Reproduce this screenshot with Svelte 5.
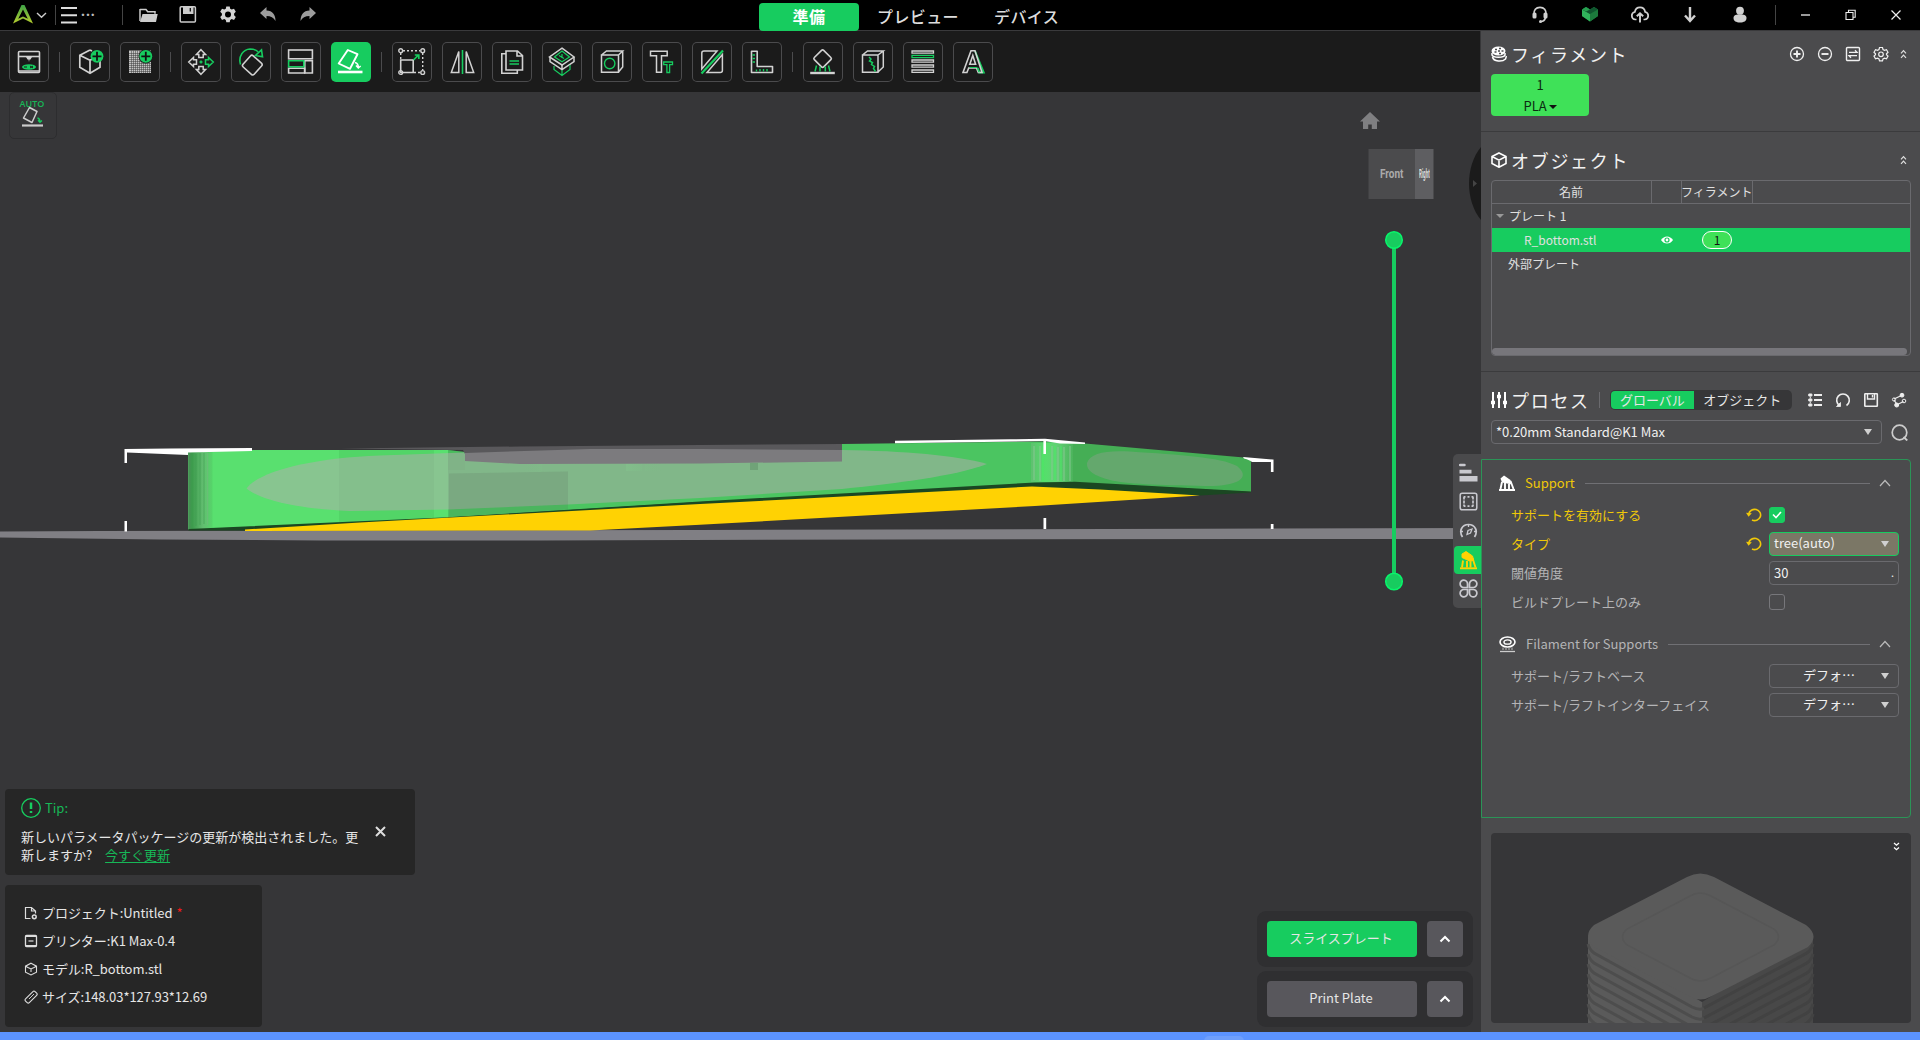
<script>
  const W = '#d2d2d2';
  const G = '#17cc5f';

  // Toolbar glyphs, drawn in a 40x40 box. Empty entries are separators.
  const tools = [
    { d: `<g stroke="${W}" stroke-width="1.6"><rect x="9.5" y="9.5" width="21" height="21" rx="1"/><path d="M9.5 14.5h21"/></g><path d="M17 15h6l-1.500 2.500h-1L20 20l-.5-2.500h-1z" fill="${W}"/><path d="M9.500 29h21" stroke="${W}" stroke-width="1.500"/><ellipse cx="20" cy="25" rx="7" ry="2.800" fill="${G}"/><path d="M15 25h3m3-1l3 2m-3 0l3-2" stroke="#1b1b1b" stroke-width="1"/>` },
    null,
    { d: `<path d="M20 8L9.800 13.300V25.300L20 31.200L30 25.300V19M9.800 13.300L20 18.300V31M20 18.300l3-1.500M20 8l2 1" stroke="${W}" stroke-width="1.700"/><circle cx="27" cy="14.300" r="6.400" fill="${G}"/><path d="M22.500 14.300h9M27 9.800v9" stroke="#111" stroke-width="1.800"/>` },
    { d: `<rect x="9" y="8.500" width="22" height="22.500" fill="#c4c4c4"/><path d="${[11, 13, 15, 17, 19, 21, 23, 25, 27, 29].map((v) => `M9 ${v}.500h22M${v}.500 8.500v22.500`).join('')}" stroke="#3a3a3a" stroke-width=".5"/><circle cx="25.800" cy="14.300" r="7.200" fill="#1b1b1b"/><circle cx="25.800" cy="14.300" r="6.400" fill="${G}"/><path d="M21.300 14.300h9M25.800 9.800v9" stroke="#111" stroke-width="1.800"/>` },
    null,
    { d: `<g stroke="${W}" stroke-width="1.500"><path d="M20 7.700l4.600 4.800h-2.400v3h-4.400v-3h-2.400z"/><path d="M20 32.300l4.600-4.800h-2.400v-3h-4.400v3h-2.400z"/><path d="M7.700 20l4.800-4.600v2.400h3v4.400h-3v2.400z"/><path stroke="${G}" d="M32.300 20l-4.800-4.600v2.400h-3v4.400h3v2.400z"/></g><path d="M18.500 20h3M20 18.500v3" stroke="${G}" stroke-width="1.500"/>` },
    { d: `<rect x="13.800" y="15.600" width="15" height="15" rx="2" transform="rotate(42 21.300 23.100)" stroke="${W}" stroke-width="1.600"/><path d="M9.500 22.500C7 14 12.500 7.300 19 7c3.500 0 6 .8 8 2.800M30.500 7.800l1 7-7-1.300z" stroke="${G}" stroke-width="1.600"/>` },
    { d: `<g stroke="${W}" stroke-width="1.600"><rect x="7.600" y="8" width="23.800" height="8.800"/><path d="M23.800 18.800h7.600v12.200h-7.600z"/><path d="M7.600 26.200h16v4.800h-16z"/><path stroke="${G}" d="M7.600 18.800h15.200v6H7.600z"/></g>` },
    { active: true, d: `<path d="M16.800 8l9.700 4.200-7.500 14.600-11.300-5.300z" stroke="#fff" stroke-width="1.900" stroke-linejoin="round"/><path d="M7 30h24.500" stroke="#fff" stroke-width="2.600"/><path d="M24 20.500q3.500 1 3.300 5m-2.300-2l2.300 2.500 2.400-2" stroke="#fff" stroke-width="1.500"/>` },
    null,
    { d: `<g stroke="${W}" stroke-width="1.400"><path d="M11 8.700h17M30.700 11v17M28 30.500h-6M8.700 11v7" stroke-dasharray="2 2"/><path d="M8.700 18h12.500v12.500H8.700z" stroke-width="1.600"/><circle cx="8.700" cy="8.700" r="1.900"/><circle cx="30.700" cy="8.700" r="1.900"/><circle cx="30.700" cy="30.500" r="1.900"/><circle cx="8.700" cy="30.500" r="1.900"/></g><path d="M21.500 18l4.500-4.500M22.800 13h4v4" stroke="${G}" stroke-width="1.700"/>` },
    { d: `<path d="M16.800 9.500v21H9.300zM24.200 9.500v21h7.500z" stroke="${W}" stroke-width="1.500"/><path d="M20.500 8v24" stroke="${G}" stroke-width="1.600"/>` },
    { d: `<g stroke="${W}" stroke-width="1.600"><path d="M14 9h11.500l5 4.500V28H14zM25 9v5h5.500"/><path d="M14 11.800H9.800v19.400h15.500V28"/></g><path d="M17.500 19h9.500M17.500 22h9.500" stroke="${G}" stroke-width="1.400"/>` },
    { d: `<g stroke="${W}" stroke-width="1.500"><path d="M20 6.200l12 8.800-12 8-12.500-8z"/><path d="M8 15v4.500l12 8 12-8V15M20 23v5"/></g><path d="M20 9l7.500 6-7.500 4.800L12.500 15zM12 24v3.500l8 6 8-6V23M20 28v5M17 13.500l5 3M20 12v4" stroke="${G}" stroke-width="1.200"/>` },
    { d: `<path d="M9.500 13h17v17.200h-17zM9.500 13l5-4h16.200l-4.200 4M30.700 9v16l-4.200 5" stroke="${W}" stroke-width="1.500"/><circle cx="17.700" cy="21.500" r="5.200" stroke="${G}" stroke-width="1.400"/>` },
    { d: `<path d="M8.500 9.200h16.700v4.600h-5.700v16.500h-5V13.800h-6z" stroke="${W}" stroke-width="1.500"/><path d="M21.700 20h8.800v2.600h-2.900v7.900h-2.700v-7.900h-3.200z" stroke="${G}" stroke-width="1.300"/>` },
    { d: `<g stroke="${W}" stroke-width="1.500"><path d="M25 9H12Q9.800 9 9.800 11v16z"/><path d="M15 30.500h13.200q2.200 0 2.200-2V12.500z"/></g><path d="M9.500 31.500L31 8.500" stroke="${G}" stroke-width="2.200"/>` },
    { d: `<path d="M9.500 9.300h5.700v15.200h15.300v6H9.500z" stroke="${W}" stroke-width="1.600" stroke-linejoin="round"/><path d="M10.500 13h2.500M10.500 16.500h2.500M10.500 20h2.500M14.500 29.500v-2M18 29.500v-2.500M21.500 29.500v-2.500M25 29.500v-2.500" stroke="${G}" stroke-width="1.400"/>` },
    null,
    { d: `<rect x="13" y="10" width="13.200" height="13.200" rx="1.500" transform="rotate(45 19.600 16.600)" stroke="${W}" stroke-width="1.600"/><path d="M7.200 31h24.600" stroke="${W}" stroke-width="2.400"/><path d="M12 29.500l1.500-6M17 29.500v-5M22.300 29.500v-5M27 29.500l-1.500-6" stroke="${G}" stroke-width="1.500"/>` },
    { d: `<path d="M9.500 13h15.500v17.200H9.500zM9.500 13l5-4h15.800L25 13M30.300 9v16L25 30" stroke="${W}" stroke-width="1.500"/><path d="M16 15l2 2-1.500 2 3 1.500-1 2 3 2-1 2 2 3" stroke="${G}" stroke-width="1.500"/>` },
    { d: `<g stroke="${W}" stroke-width="1.300"><path d="M9 9h21.500v2.200H9z"/><path stroke="${G}" d="M9 13.300h21.500v2.400H9z"/><path d="M9 18h21.500v2.200H9zM9 23h21.500v2.200H9zM9 28h21.500v2.400H9z"/></g>` },
    { d: `<path d="M22 9l8.800 21.500h-4.500l-1.600-4.500" stroke="${G}" stroke-width="1.900"/><path d="M18 8.800h4l7 21.700h-3.700L23.500 26h-7.800l-1.800 4.500H10zM16.800 22.300h5.800L19.800 13.500z" stroke="${W}" stroke-width="1.600"/><path d="M16.500 25.500h7.500l2 5" stroke="${G}" stroke-width="1"/>` },
  ];

  const fileIcons = [
    `<path d="M2 4.500h6l1.700 2.200H17v2" stroke="#ccc" stroke-width="1.500"/><path d="M2 4v12" stroke="#ccc" stroke-width="1.500"/><path d="M4.500 9h15.200L18 17H2z" fill="#ccc"/>`,
    `<rect x="2.200" y="1.800" width="15.200" height="15.200" rx="1" stroke="#ccc" stroke-width="1.500"/><path d="M5 1.500h10.500v7.500H5z" fill="#ccc"/><path d="M12.300 3v3.500" stroke="#111" stroke-width="1.300"/>`,
    `<path d="M8.300 1.500h3.400l.5 2.300 1.500.8 2.300-.8 1.800 3-1.700 1.700v1.700l1.700 1.700-1.800 3-2.300-.8-1.500.8-.5 2.300H8.300l-.5-2.300-1.500-.8-2.300.8-1.800-3 1.700-1.700V8.500L2.200 6.800l1.800-3 2.300.8 1.500-.8z" fill="#d4d4d4"/><circle cx="10" cy="9.500" r="3" fill="#000"/>`,
    `<path d="M2 8L8.500 2v3.500c6 .3 9 4 9 10.500-2-3.300-4.500-5-9-5V14z" fill="#9c9c9c"/>`,
    `<path d="M18 8l-6.500-6v3.500c-6 .3-9 4-9 10.500 2-3.300 4.500-5 9-5V14z" fill="#9c9c9c"/>`,
  ];

  const cloudIcons = [
    `<path d="M4 9.500C3.500 5 6 2.300 10 2.300s6.500 2.700 6 7.200M15.500 12.500q-1 4-4.500 4" stroke="#d0d0d0" stroke-width="1.700"/><rect x="2.500" y="7.500" width="4" height="6" rx="1.500" fill="#d0d0d0"/><rect x="13.500" y="7.500" width="4" height="6" rx="1.500" fill="#d0d0d0"/><circle cx="10.500" cy="16.500" r="1.500" fill="#d0d0d0"/>`,
    `<path d="M2 4.500L6 2l4 2.500L14 2l4 2.500V11l-8 5.500L2 11z" fill="#18893f"/><path d="M2 4.500L10 9v7.500L2 11z" fill="#31b45c"/><path d="M10 9l8-4.500V11l-8 5.500z" fill="#1c7a3c"/><path d="M2 4.500L6 2l4 2.500 4-2.500 4 2.500L10 9z" fill="#10562f"/><path d="M2 4.500L6 2l4 2.500-4 2z" fill="#26a050"/>`,
    `<path d="M6.500 14.500H5.300a3.800 3.800 0 01-.5-7.500C5.300 4 7.500 2.300 10 2.300s4.700 1.700 5.200 4.700a3.800 3.800 0 01-.5 7.500h-1.200" stroke="#d0d0d0" stroke-width="1.700"/><path d="M10 17.500V8.500M6.800 11.300L10 8.200l3.200 3.100" stroke="#d0d0d0" stroke-width="1.900"/>`,
    `<path d="M10 2v13M5 10.500l5 5.500 5-5.500" stroke="#d0d0d0" stroke-width="2.400"/>`,
    `<circle cx="10" cy="5.700" r="3.900" fill="#d0d0d0"/><path d="M3.500 13c0-3 3-3.800 6.500-3.800s6.500.8 6.500 3.800-2.500 4.500-6.500 4.500S3.500 16 3.500 13z" fill="#d0d0d0"/>`,
  ];

  const filamentIcons = [
    `<circle cx="10" cy="10" r="6.500" stroke-width="1.300"/><path d="M6.500 10h7M10 6.500v7" stroke-width="1.900"/>`,
    `<circle cx="10" cy="10" r="6.500" stroke-width="1.300"/><path d="M6.500 10h7" stroke-width="1.900"/>`,
    `<rect x="3.500" y="3.500" width="13" height="13" rx="1" stroke-width="1.400"/><path d="M6 8.300h8l-2-2M14 11.700H6l2 2" stroke-width="1.300"/>`,
    `<path d="M8.500 3.500h3l.5 2 1.500.8 2-.6 1.500 2.600-1.500 1.400v1l1.500 1.400-1.500 2.600-2-.6-1.500.8-.5 2h-3l-.5-2-1.500-.8-2 .6L3 12.100l1.500-1.400v-1L3 8.300l1.500-2.600 2 .6L8 5.500z" stroke-width="1.200"/><circle cx="10" cy="10.300" r="2.300" stroke-width="1.200"/>`,
  ];

  const processIcons = [
    `<path d="M3 5h4.500M3 10h4.500M3 15h4.500" stroke-width="1.300"/><path d="M5.300 3.500v3M5.300 8.500v3M5.300 13.500v3" stroke-width="3"/><path d="M9 5h8M9 10h8M9 15h8" stroke-width="2"/><path d="M5.300 6.500v2M5.300 11.500v2" stroke-width="1"/>`,
    `<path d="M6.500 15.500A6.300 6.300 0 1113.500 15.500" stroke-width="1.600"/><path d="M3.500 16.500h4v-4z" fill="#eee" stroke-width=".8"/>`,
    `<rect x="3.800" y="3.800" width="12.500" height="12.500" rx=".5" stroke-width="1.600"/><path d="M6.500 4v5h7V4M11.500 5v2.500" stroke-width="1.400"/>`,
    `<path d="M5 9L12.500 5.500M5 10l3 4.500M7.500 15l7-3.500" stroke-width="1.300"/><circle cx="5" cy="9.500" r="1.600"/><circle cx="13" cy="5.200" r="1.900" fill="#eee"/><circle cx="7.700" cy="15" r="2" fill="#eee"/><circle cx="15" cy="11" r="1.800"/>`,
  ];

  const tabs = [
    { d: `<path d="M1 2h4.500" stroke-width="2.500" stroke-linecap="round"/><path d="M.5 6.700h12v3.800H.5zM.5 13h18v5.500H.5z" fill="#c9c9cf" stroke="none"/>` },
    { d: `<rect x="1.200" y="1.200" width="16.600" height="16.600" rx="2" stroke-width="1.500"/><path d="M5 4.800h9M5 14.200h9" stroke-width="1.700" stroke-dasharray="1.500 2 2 2"/><path d="M5 4.500v10M14 4.500v10" stroke-width="1.700" stroke-dasharray="3 1"/>` },
    { d: `<path d="M3.500 16C-.5 10 3 3.500 9.500 3.500S19.500 10 15.500 16" stroke-width="1.700"/><path d="M2 10.500h2M15 10.500h2M9.500 4v2" stroke-width="1.300"/><path d="M8 13.500l1-4 4-1.500-1.500 4z" stroke-width="1.300"/>` },
    { active: true, d: `<path d="M3 3l4-2.500 6.500 4.500 1 4-3 1.500L3 6.500z" fill="#ffd203" stroke="#ffd203"/><path d="M1 17.300h17" stroke="#ffd203" stroke-width="1.900"/><path d="M3 16.500l1-7M8 16.500V10M11.500 16.500v-6M16.500 16.500L13.500 7" stroke="#ffd203" stroke-width="1.900"/>` },
    { d: `<g stroke-width="1.700"><path d="M8.500 8.500H5A3.700 3.700 0 118.500 5zM10.500 8.500V5a3.700 3.700 0 113.700 3.500zM8.500 10.500V14A3.700 3.700 0 114.800 10.500zM10.500 10.500h3.500a3.700 3.700 0 11-3.500 3.500z"/></g>` },
  ];

  const info = [
    { label: 'プロジェクト:Untitled', star: true, d: `<path d="M6.500 12.500H1.500V1.500h6l4 3.500v2.500M7.500 1.500V5h4"/><circle cx="10.300" cy="10.800" r="1.900" stroke-width="1.500"/>` },
    { label: 'プリンター:K1 Max-0.4', d: `<rect x="1.500" y="1.500" width="11" height="11" rx="1" stroke-width="1.300"/><path d="M1.500 2.300h11M1.500 11.700h11" stroke-width="1.500"/><path d="M4.500 7h5" stroke-width="1.200"/>` },
    { label: 'モデル:R_bottom.stl', d: `<path d="M7 1.200l5.500 3v6L7 13l-5.500-2.800v-6zM4 5.500L7 7l3-1.500M7 7v3M1.500 4.200L4 5.500M12.500 4.200L10 5.500" stroke-width="1.100"/>` },
    { label: 'サイズ:148.03*127.93*12.69', d: `<rect x=".3" y="4.500" width="13.400" height="5.300" rx="1.500" transform="rotate(-45 7 7)" stroke-width="1.100"/><path d="M5 9l5-5" stroke-width=".9"/>` },
  ];
</script>

{#snippet icon(d, size, box = size)}
  <svg width={size} height={size} viewBox="0 0 {box} {box}" fill="none">{@html d}</svg>
{/snippet}

{#snippet collapse()}
  <svg class="collapse" width="9" height="10" viewBox="0 0 9 10" fill="none"><path d="M2 4.300L4.500 1.700 7 4.300M2 8.800L4.500 6.200 7 8.800" stroke="#e0e0e0" stroke-width="1.200" /></svg>
{/snippet}

{#snippet reset()}
  <svg class="reset" width="16" height="16" viewBox="0 0 16 16" fill="none"><path d="M2.700 7A6 5.600 0 116 13" stroke="#f0c808" stroke-width="1.600" /><path d="M0 5.800l5.800.4-3.200 3.500z" fill="#f0c808" /></svg>
{/snippet}

{#snippet combo(text, extra)}
  <div class="combo {extra}"><span>{text}</span><i class="tri"></i></div>
{/snippet}

<div class="app">
  <header class="titlebar">
    <svg class="logo" width="22" height="20" viewBox="0 0 22 20"><defs><linearGradient id="lg" x1="0" y1="0" x2="0" y2="1"><stop offset="0" stop-color="#3fa447" /><stop offset="1" stop-color="#b5cc2e" /></linearGradient></defs><path fill="url(#lg)" d="M9.500 0h3L21 18.500l-10-5-10 5zM11 4.500L6.200 13.800 11 11.500l4.800 2.300z" /></svg>
    <svg class="caret" width="11" height="7" viewBox="0 0 11 7" fill="none"><path d="M1 1l4.500 4.300L10 1" stroke="#ccc" stroke-width="1.400" /></svg>
    <i class="vline"></i>
    <svg class="burger" width="16" height="17" viewBox="0 0 16 17"><path d="M0 1h16M0 8.300h16M0 15.500h16" stroke="#ddd" stroke-width="2" /></svg>
    <span class="dots">···</span>
    <i class="vline v2"></i>
    <div class="files">{#each fileIcons as d}{@render icon(d, 20)}{/each}</div>
    <nav class="modes"><b class="on">準備</b><b>プレビュー</b><b>デバイス</b></nav>
    <div class="cloud">{#each cloudIcons as d}{@render icon(d, 20)}{/each}</div>
    <i class="vline"></i>
    <div class="win">
      {@render icon('<path d="M1 6h9" stroke="#eee" stroke-width="1.300"/>', 12)}
      {@render icon('<path d="M1 3.500h7v7H1zM3.500 3.500V1.300h6.700v7H8" stroke="#eee" stroke-width="1.100"/>', 12)}
      {@render icon('<path d="M1.500 1.500l9 9M10.500 1.500l-9 9" stroke="#eee" stroke-width="1.200"/>', 12)}
    </div>
  </header>

  <div class="body">
    <main>
      <div class="toolbar">
        {#each tools as t}
          {#if t}
            <button class="tool" class:active={t.active}>{@render icon(t.d, 40)}</button>
          {:else}
            <i class="sep"></i>
          {/if}
        {/each}
      </div>

      <section class="viewport">
        <svg class="scene" width="1481" height="940" viewBox="0 92 1481 940">
          <defs>
            <linearGradient id="edgeL"><stop offset="0" stop-color="#4c8d58" /><stop offset=".15" stop-color="#3c9b4c" /><stop offset=".6" stop-color="#62bd70" /><stop offset="1" stop-color="#55d569" /></linearGradient>
            <linearGradient id="corner"><stop offset="0" stop-color="#5fc070" /><stop offset=".35" stop-color="#55df6b" /><stop offset=".6" stop-color="#62d075" /><stop offset="1" stop-color="#4cb45c" /></linearGradient>
            <linearGradient id="fade"><stop offset="0" stop-color="#7cbb85" stop-opacity="0" /><stop offset=".5" stop-color="#8ccb95" /><stop offset="1" stop-color="#7cbb85" stop-opacity="0" /></linearGradient>
          </defs>
          <polygon fill="#807f84" points="0,531.5 100,531 700,530 1200,528.700 1481,528 1481,539 1250,539 890,539.500 540,540.500 320,540.500 160,539.500 0,537.500" />
          <polygon fill="#4bc561" points="188.500,452 252,450 448,450 465,452 465,460 842,460 842,444 1045,441.500 1085,443.500 1085,483 1035,484.500 700,502 448,517.500 188.500,529.500" />
          <polygon fill="#59e06f" points="188.500,452 252,450 448,450 448,518 188.500,529.500" />
          <polygon fill="#52d567" points="339,450 448,450 448,518 339,523" />
          <polygon fill="#59e06f" points="434,450 448,450 448,518 434,518.600" />
          <path d="M188.500 452h24v76.500l-24 1.200z" fill="url(#edgeL)" />
          <path d="M191 454v72M196 454v72M200 453v72M204 453v71" stroke="#3f9d50" stroke-width="1" opacity=".6" />
          <path d="M207.500 453v72" stroke="#73b97e" stroke-width="1.500" opacity=".6" />
          <polygon fill="#45ae55" points="1072,442.500 1085,443.500 1244,457.500 1251,460 1251,492 1072,482.500" />
          <path d="M448 450l17 2v18h-17z" fill="#45ae55" opacity=".4" />
          <path d="M246.500 488.500C258 472 310 458 380 455.500L465 452.500 590 449 842 450C905 451 955 455 987 464C955 476 900 483 842 489L700 498 568 504.500 448 509.500 350 511C300 509 262 501 246.500 488.500z" fill="#b9aab3" fill-opacity=".49" />
          <path d="M1087 463C1090 453 1106 450 1130 451.500C1180 455 1220 457 1237 466C1252 478 1237 486.500 1205 486C1160 485 1125 484 1110 480C1095 476 1086 471 1087 463z" fill="#8aa28c" fill-opacity=".45" />
          <path d="M449 473.500l119-2v38l-119 8.500z" fill="#4a4a50" fill-opacity=".13" />
          <polygon fill="#59585b" points="340,448.500 520,446.500 700,445 842,444 842,452 465,454 463,450" />
          <polygon fill="#7c7b7e" points="465,453 590,449 700,449 842,450 842,461.500 700,463.500 520,464 465,461" />
          <path d="M524 464h18v8h-18zM626 464h16v7h-16zM645 464h16v7h-16z" fill="url(#fade)" />
          <path d="M750 463h8v7h-8z" fill="#4f7d58" opacity=".35" />
          <path d="M1031 443l42 0v39l-42 0z" fill="url(#corner)" />
          <path d="M1034 446v34M1040 446v35M1052 446v34M1058 447v34M1064 447v34M1070 446v35" stroke="#8cc797" stroke-width="2" opacity=".45" />
          <path d="M1043 446v35M1055 446v35M1061 446v35" stroke="#45f262" stroke-width="1.500" opacity=".55" />
          <polygon fill="#1b4722" points="188.500,529 448,517.300 700,501.500 1035,482.500 1075,481.800 1251,491.500 1251,492.500 1200,495.500 1030,487.500 700,504.500 245,530.500 188.500,530.500" />
          <polygon fill="#ffd203" points="245,529.500 360,522.500 700,504 1032,486.500 1100,489.500 1200,495.500 1035,506 700,524.700 590,530.500 245,531" />
          <path d="M124.500 449L170 448.500 252 448v3L188 452.500v2.500L127 452.500v10.500h-2.500zM124.500 521h2.500v10.500h-2.500zM895 440.700L1010 439.300 1045 438.700 1085 442.500v1.500l-25-.5-14-2.300v12.800h-2.600V441L895 443.300zM1043.500 518h2.700v11h-2.700zM1243 457l29.500 2.500h1v12.500h-2.600v-10L1252 462q-2-2-8-3.500zM1270.800 524h2.700v5h-2.700z" fill="#fff" />
          <path d="M1394 240v342" stroke="#17cc5f" stroke-width="4" />
          <g fill="#17cc5f" stroke="#08f56b" stroke-width="1.500"><circle cx="1394" cy="240" r="8.300" /><circle cx="1394" cy="581.500" r="8.300" /></g>
          <path d="M1370 112l-10 9.500h3V129h5.200v-4.500h3.600V129h5.200v-7.500h3z" fill="#7f7f81" />
          <path d="M1368.500 149h46.500v50h-46.500z" fill="#4b4b4d" /><path d="M1415 149h18.500v50H1415z" fill="#5e5e61" />
          <path d="M1481 147c-16 19-16 54 0 73z" fill="#1b1b1b" /><path d="M1473 180v7l4-3.500z" fill="#444" />
        </svg>
        <span class="face front">Front</span>
        <span class="face right">Right</span>

        <div class="auto">
          <span>AUTO</span>
          <svg width="24" height="22" viewBox="0 0 24 22" fill="none"><path d="M9.500 1.500l7.500 4-5 11L3.500 12z" stroke="#ccc" stroke-width="1.500" stroke-linejoin="round" /><path d="M2 19.500h21" stroke="#ccc" stroke-width="2.200" /><path d="M17.500 12q2.500.5 2.500 4m-2-1.700l2 2 2-1.700" stroke="#17cc5f" stroke-width="1.300" /></svg>
        </div>

        <div class="left-stack">
          <div class="tip">
            <div class="tip-main">
              <div class="tip-head">
                {@render icon('<circle cx="10" cy="10" r="9.300" stroke="#17cc5f" stroke-width="1.300"/><path d="M10 4.500v6.500M10 13v2" stroke="#17cc5f" stroke-width="2.500"/>', 20)}
                <span>Tip:</span>
              </div>
              <p>新しいパラメータパッケージの更新が検出されました。更<br />新しますか? <u>今すぐ更新</u></p>
            </div>
            {@render icon('<path d="M1 1l9 9M10 1l-9 9" stroke="#ddd" stroke-width="2"/>', 11)}
          </div>
          <div class="info">
            {#each info as row}
              <div class="info-row">
                <svg width="14" height="14" viewBox="0 0 14 14" fill="none" stroke="#ddd" stroke-width="1.200">{@html row.d}</svg>
                <span>{row.label}</span>{#if row.star}<em>*</em>{/if}
              </div>
            {/each}
          </div>
        </div>

        <div class="actions">
          {#each [['スライスプレート', true], ['Print Plate', false]] as [text, primary]}
            <div class="action">
              <button class="main" class:primary>{text}</button>
              <button class="up"><svg width="12" height="8" viewBox="0 0 12 8" fill="none"><path d="M1.500 6.500L6 2l4.500 4.500" stroke="#fff" stroke-width="2" /></svg></button>
            </div>
          {/each}
        </div>

        <div class="tabs">
          {#each tabs as t}
            <div class="tab" class:active={t.active}>
              <svg width="19" height="19" viewBox="0 0 19 19" fill="none" stroke="#c9c9cf">{@html t.d}</svg>
            </div>
          {/each}
        </div>
      </section>
    </main>

    <aside>
      <section class="filament">
        <div class="heading">
          <svg width="16" height="16" viewBox="0 0 16 16" fill="none"><ellipse cx="7.500" cy="5" rx="7" ry="4.500" fill="#fff" /><path d="M1 7v2c1 3 12 3 13 0V7M1.500 11c1 5 10 5 13 2l1-3" stroke="#fff" stroke-width="1.500" /><path d="M4 3.500h2M8 2.500h2M10.500 5h2M3.500 6h2M7 5h2M8 7.500h2" stroke="#4b4b4d" stroke-width="1.300" /></svg>
          <h2>フィラメント</h2>
          <div class="icons">{#each filamentIcons as d}<svg width="20" height="20" viewBox="0 0 20 20" fill="none" stroke="#f0f0f0">{@html d}</svg>{/each}</div>
          {@render collapse()}
        </div>
        <div class="spool"><span>1</span><span>PLA <i></i></span></div>
      </section>

      <section class="objects">
        <div class="heading">
          <svg width="16" height="16" viewBox="0 0 16 16" fill="none"><path d="M8 1l7 3.500v7L8 15.200 1 11.500v-7zM1 4.500l7 3.700 7-3.700M8 8.200V15" stroke="#fff" stroke-width="1.600" /></svg>
          <h2>オブジェクト</h2>
          {@render collapse()}
        </div>
        <div class="tree">
          <div class="cols"><span>名前</span><span></span><span>フィラメント</span><span></span></div>
          <div class="node"><i class="open"></i>プレート 1</div>
          <div class="node selected">
            <span class="name">R_bottom.stl</span>
            <svg class="eye" width="12" height="8" viewBox="0 0 12 8"><path d="M0 4C3-.8 9-.8 12 4 9 8.800 3 8.800 0 4z" fill="#fff" /><circle cx="6" cy="4" r="2.600" fill="#17cc5f" /><circle cx="6" cy="4" r="1.400" fill="#fff" /></svg>
            <span class="pill">1</span>
          </div>
          <div class="node">外部プレート</div>
          <div class="hscroll"></div>
        </div>
      </section>

      <section class="process">
        <div class="heading">
          <svg width="16" height="18" viewBox="0 0 16 18" fill="none"><path d="M2 1v16M8 1v16M14 1v16" stroke="#fff" stroke-width="2" /><path d="M0 11.500h4M6 5.500h4M12 11.500h4" stroke="#fff" stroke-width="3.400" /></svg>
          <h2>プロセス</h2>
          <i class="bar"></i>
          <div class="toggle"><b>グローバル</b><span>オブジェクト</span></div>
          <div class="icons">{#each processIcons as d}<svg width="20" height="20" viewBox="0 0 20 20" fill="none" stroke="#eee">{@html d}</svg>{/each}</div>
        </div>
        <div class="preset">
          {@render combo('*0.20mm Standard@K1 Max', 'wide')}
          {@render icon('<circle cx="8.500" cy="8.500" r="7.300" stroke="#ccc" stroke-width="1.700"/><path d="M12.500 13l3.800 3.500" stroke="#ccc" stroke-width="1.800"/>', 17)}
        </div>
      </section>

      <section class="params">
        <div class="group changed">
          <svg width="16" height="16" viewBox="0 0 16 16" fill="none"><path d="M1.500 3.500L5 .5l6.500 4.500 1.500 4.500L3 7.500z" fill="#fff" /><path d="M0 15h16M1.500 14l1.500-7M6 14V8M10 14V9M14.500 14L11.500 6" stroke="#fff" stroke-width="1.900" /></svg>
          <span>Support</span><i></i>
          <svg width="12" height="8" viewBox="0 0 12 8" fill="none"><path d="M1 7l5-5.500L11 7" stroke="#bbb" stroke-width="1.200" /></svg>
        </div>
        <div class="row changed"><label for="c1">サポートを有効にする</label>{@render reset()}<div class="ctl"><span class="check on"><svg width="10" height="8" viewBox="0 0 10 8" fill="none"><path d="M1 3.500L4 6.500 9 1" stroke="#fff" stroke-width="1.600" /></svg></span></div></div>
        <div class="row changed"><label for="c2">タイプ</label>{@render reset()}<div class="ctl">{@render combo('tree(auto)', 'hot')}</div></div>
        <div class="row"><label for="c3">閾値角度</label><div class="ctl"><div class="field"><span>30</span><small>.</small></div></div></div>
        <div class="row"><label for="c4">ビルドプレート上のみ</label><div class="ctl"><span class="check"></span></div></div>
        <div class="group second">
          <svg width="17" height="17" viewBox="0 0 17 17" fill="none"><ellipse cx="8.500" cy="6" rx="7.500" ry="5" stroke="#fff" stroke-width="1.600" /><ellipse cx="8.500" cy="6" rx="3.600" ry="2.200" stroke="#fff" stroke-width="1.300" /><path d="M4 11.500v2.500M7 12v2M10 12v2M13 11.500v2.500" stroke="#bbb" stroke-width="1" /><path d="M1 15.500h15" stroke="#ccc" stroke-width="1.300" /></svg>
          <span>Filament for Supports</span><i></i>
          <svg width="12" height="8" viewBox="0 0 12 8" fill="none"><path d="M1 7l5-5.500L11 7" stroke="#bbb" stroke-width="1.200" /></svg>
        </div>
        <div class="row"><label for="c5">サポート/ラフトベース</label><div class="ctl">{@render combo('デフォ…', 'mid')}</div></div>
        <div class="row"><label for="c6">サポート/ラフトインターフェイス</label><div class="ctl">{@render combo('デフォ…', 'mid')}</div></div>
      </section>

      <section class="preview">
        <svg width="420" height="190" viewBox="1491 833 420 190" fill="none">
          <path d="M1588 936L1702 1002V1023H1588z" fill="#5a5a5a" />
          <path d="M1813 936L1702 1002V1023H1813z" fill="#484848" />
          {#each [0, 10, 20, 30, 40, 50, 60, 70, 80] as o}
            <path d="M1588 {944 + o}Q1589 {949 + o} 1594 {953 + o}L1692 {1007 + o}Q1700 {1011 + o} 1704 {1008 + o}" stroke="#4d4d4d" stroke-width="3" />
            <path d="M1704 {1008 + o}L1807 {953 + o}Q1812 {949 + o} 1813 {944 + o}" stroke="#424242" stroke-width="3" />
          {/each}
          <path d="M1687 877Q1700 870 1714 877L1806 925Q1820 936 1808 947L1712 996Q1700 1003 1689 996L1594 947Q1582 936 1594 925z" fill="#5a5a5a" />
          <path d="M1690 896Q1700 890 1711 896L1774 929Q1783 937 1774 945L1711 978Q1700 984 1690 978L1627 945Q1618 937 1627 929z" stroke="#565656" stroke-width="1.500" />
          <path d="M1894 843l2.500 2.200 2.500-2.200M1894 847.500l2.500 2.200 2.500-2.200" stroke="#fff" stroke-width="1.300" />
        </svg>
      </section>
    </aside>
  </div>

  <footer><i></i></footer>
</div>

<style>
  :global(body) { margin: 0; background: #363638; overflow: hidden; }
  .app { width: 1920px; height: 1040px; display: flex; flex-direction: column; font: 13px/20px "Noto Sans CJK JP", "Noto Sans", sans-serif; color: #e6e6e6; }
  svg { display: block; flex: none; }
  button { padding: 0; border: 0; background: none; font: inherit; color: inherit; box-sizing: border-box; }

  .titlebar { height: 31px; flex: none; background: #000; display: flex; align-items: center; border-bottom: 1px solid #3a3a3c; box-sizing: border-box; }
  .logo { margin-left: 12px; }
  .caret { margin-left: 2px; }
  .vline { width: 1px; height: 20px; background: #444; }
  .caret + .vline { margin-left: 8px; }
  .burger { margin-left: 5px; }
  .dots { width: 40px; margin-left: 4px; font-size: 14px; letter-spacing: 1px; font-family: "Noto Sans", sans-serif; font-weight: 700; color: #bbb; }
  .v2 { margin-left: 1px; }
  .files { display: flex; gap: 20px; margin-left: 15px; }
  .modes { display: flex; align-items: center; margin-left: 441px; width: 330px; align-self: stretch; font-size: 16px; color: #ddd; }
  .modes b { font-weight: 500; height: 28px; line-height: 27px; margin-top: 3px; white-space: nowrap; letter-spacing: .4px; }
  .modes .on { width: 100px; text-align: center; background: #17cc5f; color: #fff; border-radius: 4px; font-weight: 700; margin-right: 18px; }
  .modes b:last-child { margin-left: 35px; }
  .cloud { display: flex; gap: 30px; margin-left: auto; margin-right: 25px; }
  .win { display: flex; gap: 33px; margin: 0 18px 0 24px; }

  .body { flex: 1; display: flex; min-height: 0; }
  main { width: 1481px; display: flex; flex-direction: column; }
  .toolbar { height: 61px; flex: none; box-sizing: border-box; background: #1b1b1b; display: flex; align-items: center; gap: 10px; padding-left: 9px; border-right: 1px solid #363638; }
  .tool { width: 40px; height: 40px; box-shadow: inset 0 0 0 1px #4b4b4d; border-radius: 5px; }
  .tool.active { background: #17cc5f; box-shadow: none; }
  .sep { width: 1px; height: 20px; background: #4b4b4d; }

  .viewport { flex: 1; position: relative; background: #363638; overflow: hidden; }
  .scene { position: absolute; left: 0; top: 0; }
  .face { position: absolute; font-family: Roboto, sans-serif; font-weight: 700; color: #aaa; font-size: 12.500px; line-height: 14px; top: 75px; transform-origin: 0 0; }
  .front { left: 1379.500px; transform: scaleX(.8); }
  .right { left: 1419px; color: #ddd; transform: scaleX(.36); }
  .auto { position: absolute; left: 9px; top: 0; width: 48px; height: 47px; box-sizing: border-box; border: 1px solid #2d2d2f; border-radius: 5px; background: #363638; display: flex; flex-direction: column; align-items: center; padding: 6px 2px 0 0; }
  .auto span { font: 600 9px/9px "Open Sans", sans-serif; color: #17b757; height: 7px; }
  .left-stack { position: absolute; left: 5px; bottom: 5px; display: flex; flex-direction: column; gap: 10px; align-items: flex-start; }
  .tip { width: 410px; height: 86px; box-sizing: border-box; padding: 9px 29px 0 16px; border-radius: 4px; background: #262626; display: flex; justify-content: space-between; align-items: flex-start; }
  .tip > :global(svg) { margin-top: 28px; }
  .tip-head { display: flex; align-items: center; gap: 4px; color: #17b757; }
  .tip p { margin: 10px 0 0; line-height: 18px; white-space: nowrap; }
  .tip u { color: #17b757; margin-left: 10px; text-underline-offset: 2px; }
  .info { width: 257px; height: 142px; box-sizing: border-box; padding: 14px 0 0 19px; border-radius: 4px; background: #262626; }
  .info-row { display: flex; align-items: center; height: 28px; }
  .info-row span { margin-left: 4px; letter-spacing: -.05px; }
  .info-row em { color: #f01818; font-style: normal; margin-left: 4px; }
  .actions { position: absolute; right: 8px; bottom: 5px; display: flex; flex-direction: column; gap: 4px; }
  .action { width: 216px; height: 56px; box-sizing: border-box; padding: 10px; display: flex; gap: 10px; background: #2f2f31; border-radius: 9px; }
  .main { width: 150px; height: 36px; border-radius: 4px; background: #58575c; padding: 0 2px 2px 0; }
  .main.primary { background: #17cc5f; }
  .up { width: 36px; height: 36px; border-radius: 4px; background: #58575c; display: grid; place-items: center; }
  .tabs { position: absolute; right: 0; top: 362px; width: 28px; height: 154px; box-sizing: border-box; padding: 4px 0 0 1px; background: #4a4a4c; border-radius: 5px 0 0 5px; }
  .tab { height: 29px; box-sizing: border-box; display: flex; align-items: center; padding-left: 5px; }
  .tab.active { background: #17cc5f; border-radius: 4px 0 0 4px; height: 28px; margin-top: 1px; }

  aside { width: 439px; background: #4b4b4d; display: flex; flex-direction: column; }
  .heading { display: flex; align-items: center; height: 24px; }
  h2 { margin: -1px 0 0 4px; font-size: 18px; line-height: 24px; letter-spacing: 1.700px; font-weight: 400; color: #f2f2f2; white-space: nowrap; }
  .icons { display: flex; gap: 8px; margin-left: auto; }
  .filament { height: 101px; flex: none; box-sizing: border-box; padding: 11px 12px 0 10px; border-bottom: 1px solid #3b3b3d; }
  .heading :global(.collapse) { margin-left: auto; }
  .heading .icons + :global(.collapse) { margin-left: 8px; }
  .spool { width: 98px; height: 42px; margin-top: 8px; border-radius: 4px; background: #3fe158; color: #0c2a12; display: flex; flex-direction: column; align-items: center; line-height: 21px; }
  .spool i { display: inline-block; border: 4px solid transparent; border-top: 4.500px solid #111; border-bottom: 0; margin: 0 0 2px -1px; }
  .objects { height: 240px; flex: none; box-sizing: border-box; padding: 16px 9px 0 10px; border-bottom: 1px solid #3b3b3d; }
  .objects .heading { padding-right: 3px; }
  .tree { margin-top: 8px; height: 176px; box-sizing: border-box; border: 1px solid #6a6a6e; border-radius: 4px; display: flex; flex-direction: column; overflow: hidden; color: #e0e0e0; }
  .cols { display: flex; height: 23px; flex: none; box-sizing: border-box; border-bottom: 1px solid #6a6a6e; font-size: 12px; line-height: 21px; text-align: center; }
  .cols span { border-right: 1px solid #6a6a6e; box-sizing: border-box; white-space: nowrap; flex: 0 0 70px; text-indent: -1px; }
  .cols span:first-child { flex-basis: 160px; }
  .cols span:nth-child(2) { flex-basis: 30px; }
  .cols span:last-child { border: 0; }
  .node { height: 24px; flex: none; display: flex; align-items: center; padding-left: 16px; font-size: 12px; }
  .open { border: 4px solid transparent; border-top: 4.500px solid #999; border-bottom: 0; margin: 0 5px 0 -12px; }
  .selected { background: #17cc5f; padding-left: 32px; }
  .name { width: 137px; }
  .pill { margin-left: 29px; width: 30px; height: 18px; box-sizing: border-box; border: 1px solid #fff; border-radius: 9px; background: #3fe158; color: #111; text-align: center; line-height: 15px; }
  .hscroll { margin: auto 3px 0 0; height: 7px; border-radius: 4px; background: #77767b; }

  .process { height: 87px; flex: none; box-sizing: border-box; padding: 16px 11px 0 10px; }
  .bar { width: 1px; height: 16px; background: #6a6a6e; margin-left: 9px; }
  .toggle { margin-left: 10px; width: 182px; height: 20px; box-sizing: border-box; padding: 1px; border-radius: 5px; background: #363638; display: flex; line-height: 17px; text-align: center; }
  .toggle b { width: 83px; font-weight: 400; background: #17cc5f; border-radius: 4px 0 0 4px; }
  .toggle span { flex: 1; }
  .preset { display: flex; align-items: center; margin-top: 8px; gap: 9px; }
  .combo { height: 24px; box-sizing: border-box; border: 1px solid #6a6a6e; border-radius: 4px; display: flex; align-items: center; padding: 0 9px 0 4px; justify-content: space-between; color: #f0f0f0; }
  .combo span { margin-top: -1px; }
  .wide { width: 391px; }
  .mid { padding-left: 33px; }
  .hot { background: #7b7766; border-color: #17cc5f; }
  .tri { border: 4px solid transparent; border-top: 6px solid #d0d0d0; border-bottom: 0; }

  .params { width: 430px; height: 359px; flex: none; box-sizing: border-box; border: 1px solid #2b9457; border-radius: 0 4px 4px 0; padding: 11px 11px 0 17px; color: #b4b4b6; }
  .group { display: flex; align-items: center; height: 24px; margin-bottom: 5px; padding-right: 8px; }
  .group span { margin: 0 10px 0 10px; }
  .group i { flex: 1; height: 1px; background: #707074; margin-right: 9px; }
  .changed { color: #f0c808; }
  .second { margin-top: 16px; margin-bottom: 5px; }
  .row { display: flex; align-items: center; height: 29px; padding-left: 12px; }
  .row label { flex: 1; white-space: nowrap; }
  .row :global(.reset) { margin-right: 7px; }
  .ctl { width: 130px; }
  .check { display: grid; place-items: center; width: 16px; height: 16px; box-sizing: border-box; border: 1px solid #77777b; border-radius: 3px; }
  .check.on { background: #17cc5f; border-color: #17cc5f; }
  .field { height: 24px; box-sizing: border-box; border: 1px solid #6a6a6e; border-radius: 4px; padding: 0 4px; display: flex; justify-content: space-between; line-height: 21px; color: #f0f0f0; }
  .preview { margin: 15px 0 0 10px; width: 420px; height: 190px; background: #363638; border-radius: 4px; overflow: hidden; }

  footer { height: 8px; flex: none; background: #5b93ff; overflow: hidden; }
  footer i { display: block; width: 40px; height: 10px; margin: 4px 0 0 1204px; border-radius: 5px; background: #6f9ffb; }
</style>
